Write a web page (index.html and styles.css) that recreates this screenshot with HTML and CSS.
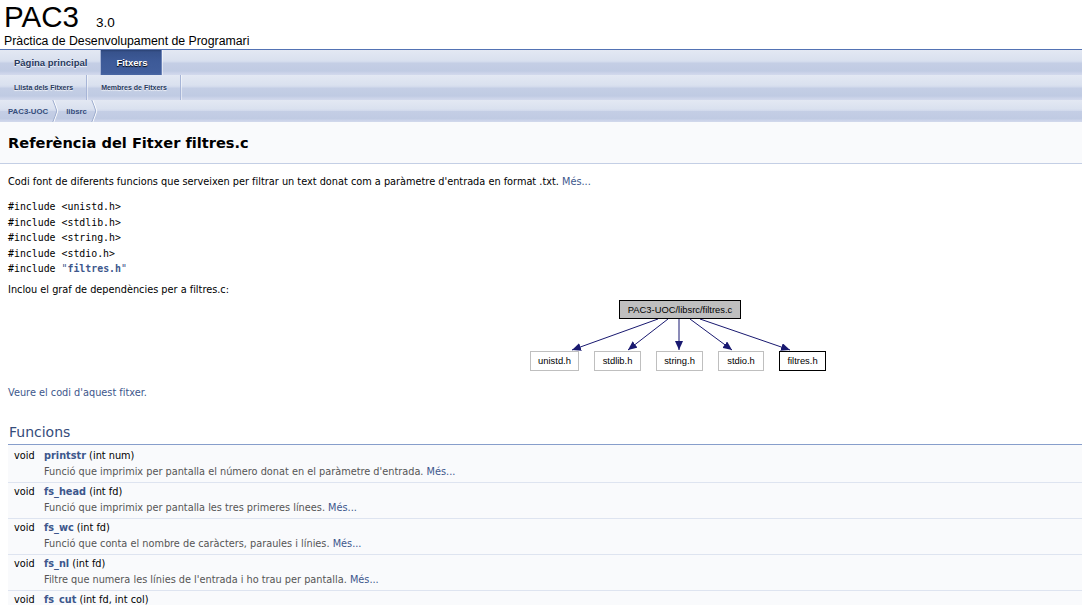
FILE: index.html
```html
<!DOCTYPE html>
<html lang="ca">
<head>
<meta charset="utf-8">
<title>PAC3: Referència del Fitxer filtres.c</title>
<link rel="stylesheet" href="styles.css">
</head>
<body>
<div class="titlearea">
  <div class="projectname">PAC3<span class="projectnumber">3.0</span></div>
  <div class="projectbrief">Pràctica de Desenvolupament de Programari</div>
</div>
<div class="tabs">
  <ul class="tablist">
    <li><a>Pàgina principal</a></li>
    <li class="current"><a>Fitxers</a></li>
  </ul>
</div>
<div class="tabs tabs2">
  <ul class="tablist">
    <li><a>Llista dels Fitxers</a></li>
    <li><a>Membres de Fitxers</a></li>
  </ul>
</div>
<div class="navpath">
  <ul>
    <li><a>PAC3-UOC</a><svg class="crumb" width="7" height="22" viewBox="0 0 7 22"><path d="M1.5 0 Q4 6 5.5 11 Q4 16 1.5 22" fill="none" stroke="#fff" stroke-width="1.4"/><path d="M0.8 0 Q3.3 6 4.8 11 Q3.3 16 0.8 22" fill="none" stroke="#9aaacd" stroke-width="1"/></svg></li>
    <li><a>libsrc</a><svg class="crumb" width="7" height="22" viewBox="0 0 7 22"><path d="M1.5 0 Q4 6 5.5 11 Q4 16 1.5 22" fill="none" stroke="#fff" stroke-width="1.4"/><path d="M0.8 0 Q3.3 6 4.8 11 Q3.3 16 0.8 22" fill="none" stroke="#9aaacd" stroke-width="1"/></svg></li>
  </ul>
</div>
<div class="header">
  <div class="title">Referència del Fitxer filtres.c</div>
</div>
<div class="contents">
  <p class="desc">Codi font de diferents funcions que serveixen per filtrar un text donat com a paràmetre d'entrada en format .txt. <a class="more">Més...</a></p>
  <div class="includes">
    <div>#include &lt;unistd.h&gt;</div>
    <div>#include &lt;stdlib.h&gt;</div>
    <div>#include &lt;string.h&gt;</div>
    <div>#include &lt;stdio.h&gt;</div>
    <div>#include <span class="inc-link">"<b>filtres.h</b>"</span></div>
  </div>
  <p class="graphcap">Inclou el graf de dependències per a filtres.c:</p>
  <div class="graph">
    <svg width="304" height="76" viewBox="0 0 304 76" font-family="'Liberation Sans', Arial, sans-serif" font-size="9.4">
      <defs>
        <marker id="ah" markerWidth="9" markerHeight="8" refX="9" refY="4" orient="auto" markerUnits="userSpaceOnUse">
          <path d="M0,0 L9,4 L0,8 z" fill="#191970"/>
        </marker>
      </defs>
      <g stroke="#191970" stroke-width="1" fill="none" marker-end="url(#ah)">
        <path d="M132,21 L46,52"/>
        <path d="M142,21 L102,52"/>
        <path d="M153,21 L153,52"/>
        <path d="M164,21 L206,52"/>
        <path d="M174,21 L264,52"/>
      </g>
      <rect x="93.5" y="2.5" width="121" height="18" fill="#bfbfbf" stroke="#000"/>
      <text x="154" y="14.6" text-anchor="middle">PAC3-UOC/libsrc/filtres.c</text>
      <rect x="4.5" y="53.5" width="48" height="19" fill="#fff" stroke="#bfbfbf"/>
      <text x="28.5" y="66.2" text-anchor="middle">unistd.h</text>
      <rect x="68.5" y="53.5" width="46" height="19" fill="#fff" stroke="#bfbfbf"/>
      <text x="91.5" y="66.2" text-anchor="middle">stdlib.h</text>
      <rect x="130.5" y="53.5" width="46" height="19" fill="#fff" stroke="#bfbfbf"/>
      <text x="153.5" y="66.2" text-anchor="middle">string.h</text>
      <rect x="192.5" y="53.5" width="45" height="19" fill="#fff" stroke="#bfbfbf"/>
      <text x="215" y="66.2" text-anchor="middle">stdio.h</text>
      <rect x="253.5" y="53.5" width="46" height="19" fill="#fff" stroke="#000"/>
      <text x="276.5" y="66.2" text-anchor="middle">filtres.h</text>
    </svg>
  </div>
  <p class="srclink"><a>Veure el codi d'aquest fitxer.</a></p>
  <h2 class="groupheader">Funcions</h2>
  <div class="members">
    <div class="member">
      <div class="ret">void</div>
      <div class="sig"><a class="el">printstr</a> (int num)</div>
      <div></div>
      <div class="mdesc">Funció que imprimix per pantalla el número donat en el paràmetre d'entrada. <a class="more">Més...</a></div>
    </div>
    <div class="member">
      <div class="ret">void</div>
      <div class="sig"><a class="el">fs_head</a> (int fd)</div>
      <div></div>
      <div class="mdesc">Funció que imprimix per pantalla les tres primeres línees. <a class="more">Més...</a></div>
    </div>
    <div class="member">
      <div class="ret">void</div>
      <div class="sig"><a class="el">fs_wc</a> (int fd)</div>
      <div></div>
      <div class="mdesc">Funció que conta el nombre de caràcters, paraules i línies. <a class="more">Més...</a></div>
    </div>
    <div class="member">
      <div class="ret">void</div>
      <div class="sig"><a class="el">fs_nl</a> (int fd)</div>
      <div></div>
      <div class="mdesc">Filtre que numera les línies de l'entrada i ho trau per pantalla. <a class="more">Més...</a></div>
    </div>
    <div class="member">
      <div class="ret">void</div>
      <div class="sig"><a class="el">fs_cut</a> (int fd, int col)</div>
      <div></div>
      <div class="mdesc">Filtre que mostra la columna indicada de cada línia de l'entrada. <a class="more">Més...</a></div>
    </div>
  </div>
</div>
</body>
</html>
```
FILE: styles.css
```css
html, body {
  margin: 0;
  padding: 0;
  background: #fff;
}
body {
  font-family: "DejaVu Sans", sans-serif;
  font-size: 9.75px;
  color: #000;
}
a {
  color: #3D578C;
  text-decoration: none;
}

/* ---------- title area ---------- */
.titlearea {
  height: 49px;
  border-bottom: 1px solid #5373B4;
  font-family: "Liberation Sans", Arial, sans-serif;
  overflow: hidden;
}
.projectname {
  display: flex;
  align-items: baseline;
  font-size: 29.5px;
  line-height: 31px;
  height: 31px;
  padding: 1px 0 0 4px;
}
.projectnumber {
  font-size: 13.5px;
  line-height: 14px;
  margin-left: 17px;
}
.projectbrief {
  font-size: 12.3px;
  line-height: 19px;
  padding-left: 4px;
}

/* ---------- tabs ---------- */
.tabs, .navpath {
  background: linear-gradient(to bottom,
    #e3e8f3 0%, #dae1ef 40%, #d2daec 48%, #c4cee5 52%, #c0cbe3 84%, #cbd3e9 92%, #d2d9ec 100%);
  font-family: "Liberation Sans", Arial, sans-serif;
  font-weight: bold;
}
.tabs {
  height: 25px;
  font-size: 9.5px;
}
.tabs2 {
  font-size: 7px;
}
.tablist {
  display: flex;
  height: 100%;
  margin: 0;
  padding: 0;
  list-style: none;
}
.tablist li {
  display: flex;
  align-items: center;
  padding: 0 13px 1px 14px;
  border-right: 1px solid #a7b5d7;
  box-shadow: 1px 0 0 rgba(255,255,255,0.5);
}
.tablist li a {
  color: #283A5D;
  text-shadow: 0 1px 1px rgba(255,255,255,0.9);
}
.tablist li.current {
  padding-left: 15px;
  background: linear-gradient(to bottom,
    #2a4273 0%, #37528c 8%, #3d5a98 45%, #415e9c 90%, #4a67a4 100%);
  border-right-color: #6d84b8;
}
.tablist li.current a {
  color: #fff;
  text-shadow: 0 1px 1px rgba(0,0,0,1);
}

/* ---------- nav path ---------- */
.navpath {
  height: 22px;
  font-size: 7.8px;
}
.navpath ul {
  display: flex;
  height: 100%;
  margin: 0;
  padding: 0 0 0 1px;
  list-style: none;
}
.navpath li {
  display: flex;
  align-items: center;
  padding-left: 7px;
}
.navpath li a {
  color: #364D7C;
}
.crumb {
  margin-left: 4px;
  display: block;
}

/* ---------- header ---------- */
.header {
  background: #F9FAFC;
  border-bottom: 1px solid #C4CFE5;
  padding: 12px 7px 12px 8px;
}
.title {
  font-weight: bold;
  font-size: 14.6px;
  line-height: 17px;
}

/* ---------- contents ---------- */
.contents {
  padding-left: 8px;
}
.desc {
  margin: 10px 0 0;
  line-height: 15px;
}
.includes {
  margin-top: 10px;
  font-family: "DejaVu Sans Mono", monospace;
  font-size: 9.9px;
  line-height: 15.6px;
}
.inc-link {
  color: #3D578C;
}
.graphcap {
  margin: 5px 0 0;
  line-height: 15px;
}
.graph {
  margin-top: 1px;
  padding-left: 518px;
  height: 76px;
}
.graph svg {
  display: block;
}
.srclink {
  margin: 11px 0 0;
  line-height: 15px;
}
.groupheader {
  margin: 24px 0 0;
  padding: 0 0 3px 1px;
  font-size: 14px;
  line-height: 17px;
  font-weight: normal;
  color: #354C7B;
  border-bottom: 1px solid #879ECB;
}

/* ---------- members ---------- */
.member {
  display: grid;
  grid-template-columns: 30px 1fr;
  background: #F9FAFC;
  border-bottom: 1px solid #DEE4F0;
  padding: 1px 0 3px 6px;
}
.member:first-child {
  padding-top: 3.5px;
}
.ret, .sig {
  line-height: 16px;
}
.sig .el {
  font-weight: bold;
}
.mdesc {
  line-height: 15px;
  color: #555;
}
```
